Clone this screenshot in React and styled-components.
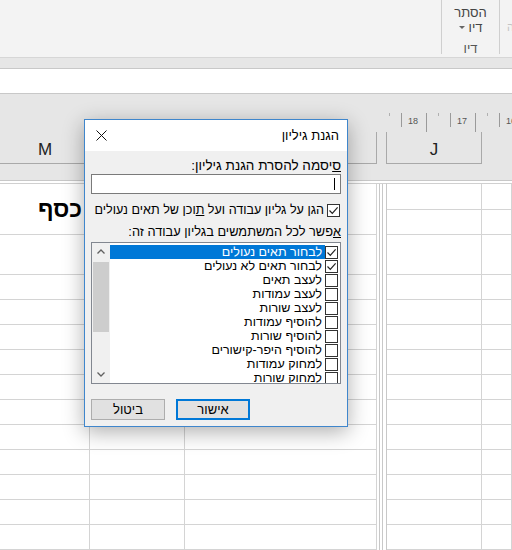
import React from 'react';
import styled, { createGlobalStyle } from 'styled-components';

const GlobalStyle = createGlobalStyle`
  *, *::before, *::after { box-sizing: border-box; }
  html, body { margin: 0; padding: 0; background: #fff; }
  body { font-family: "Liberation Sans", "DejaVu Sans", Arial, sans-serif; }
`;

const Page = styled.div`
  position: relative;
  width: 512px;
  height: 550px;
  overflow: hidden;
  display: flex;
  flex-direction: column;
  background: #fff;
`;

/* ---------- ribbon ---------- */
const Ribbon = styled.div`
  flex: none;
  height: 58px;
  background: #f3f3f3;
  border-bottom: 1px solid #d6d6d6;
  display: flex;
  justify-content: flex-end;
  align-items: flex-start;
`;

const RibbonGroup = styled.div`
  width: 59px;
  height: 54px;
  border-left: 1px solid #cfcfcf;
  border-right: 1px solid #cfcfcf;
  direction: rtl;
  display: flex;
  flex-direction: column;
  align-items: center;
  padding-top: 5px;
  font-size: 13px;
  line-height: 15px;
  color: #444;
`;

const RibbonLine = styled.div`
  display: flex;
  align-items: center;
  gap: 4px;
`;

const DropArrow = styled.span`
  width: 0;
  height: 0;
  border-left: 3px solid transparent;
  border-right: 3px solid transparent;
  border-top: 3px solid #666;
`;

const GroupLabel = styled.div`
  margin-top: 6px;
  color: #555;
`;

const GhostGlyph = styled.div`
  width: 12px;
  padding: 21px 0 0 7px;
  font-size: 11px;
  color: #c4c4c4;
  overflow: hidden;
  white-space: nowrap;
`;

const Band = styled.div`
  flex: none;
  height: 11px;
  background: #e6e6e6;
  border-bottom: 1px solid #c8c8c8;
`;

const FormulaBar = styled.div`
  flex: none;
  height: 25px;
  background: #fff;
  border-bottom: 1px solid #c8c8c8;
`;

/* ---------- sheet header ---------- */
const HeaderZone = styled.div`
  flex: none;
  height: 87px;
  display: flex;
  background: #e6e6e6;
  border-bottom: 1px solid #c8c8c8;
`;

const HeadPane = styled.div`
  width: ${p => p.$w ? `${p.$w}px` : 'auto'};
  flex: ${p => p.$w ? 'none' : 1};
  display: flex;
  flex-direction: column;
  overflow: hidden;
`;

const Outline = styled.div`
  height: 38px;
  display: flex;
  padding-left: ${p => p.$pad || 0}px;
  overflow: hidden;
`;

const RulerUnit = styled.div`
  flex: none;
  width: 49px;
  display: flex;
  align-items: flex-start;
  padding-top: 19px;
`;

const Tick = styled.span`
  width: 1px;
  height: 3px;
  background: #b0b0b0;
`;

const Bar = styled.span`
  width: 1px;
  height: ${p => p.$h}px;
  margin-left: ${p => p.$ml}px;
  background: #9a9a9a;
`;

const RulerNum = styled.span`
  margin-left: 6px;
  margin-top: 3px;
  width: 11px;
  font-size: 9px;
  line-height: 10px;
  color: #555;
  white-space: nowrap;
`;

const ColHeads = styled.div`
  height: 32px;
  display: flex;
`;

const ColHead = styled.div`
  flex: none;
  width: ${p => p.$w}px;
  display: flex;
  justify-content: center;
  align-items: flex-end;
  padding-bottom: 3px;
  font-size: 17px;
  color: #222;
  border-bottom: ${p => p.$open ? 'none' : '1px solid #a9a9a9'};
  border-left: ${p => p.$bl ? '1px solid #a9a9a9' : 'none'};
  border-right: ${p => p.$br ? '1px solid #a9a9a9' : 'none'};
`;

/* ---------- grid ---------- */
const GridZone = styled.div`
  flex: 1;
  display: flex;
  padding-top: 2px;
  background: #fff;
`;

const Grid = styled.div`
  flex: ${p => p.$w ? 'none' : 1};
  width: ${p => p.$w ? `${p.$w}px` : 'auto'};
  display: grid;
  grid-template-columns: ${p => p.$cols};
  grid-template-rows: ${p => p.$rows};
  border-top: 1px solid #d0d0d0;
`;

const Cell = styled.div`
  border-right: 1px solid #d4d4d4;
  border-bottom: 1px solid #d4d4d4;
  display: flex;
  align-items: center;
  justify-content: flex-start;
  padding-right: 7px;
  font-size: 23px;
  font-weight: bold;
  color: #000;
  direction: rtl;
  white-space: nowrap;
`;

const Splitter = styled.div`
  flex: none;
  width: 10px;
  border-top: 1px solid #d0d0d0;
  border-right: 1px solid #c8c8c8;
  background: linear-gradient(to right, #fff 0 2px, #c8c8c8 2px 3px, #fff 3px 5px, #c8c8c8 5px 6px, #fff 6px);
`;

/* ---------- dialog ---------- */
const Dialog = styled.div`
  position: absolute;
  left: 84px;
  top: 119px;
  width: 264px;
  height: 308px;
  border: 1px solid #3f86cc;
  background: #f0f0f0;
  box-shadow: 0 5px 20px rgba(0, 0, 0, 0.32);
  direction: rtl;
  display: flex;
  flex-direction: column;
  font-size: 13px;
  color: #000;
`;

const TitleBar = styled.div`
  height: 31px;
  flex: none;
  background: #fff;
  display: flex;
  align-items: center;
  justify-content: space-between;
  padding: 0 8px 0 11px;
`;

const Body = styled.div`
  padding: 7px 6px 0 6px;
  display: flex;
  flex-direction: column;
`;

const Label = styled.div`
  font-size: ${p => p.$fs || 13.5}px;
  line-height: 16px;
  margin-top: ${p => p.$mt || 0}px;
  white-space: nowrap;
`;

const Input = styled.div`
  height: 20px;
  background: #fff;
  border: 1px solid #7a7a7a;
  display: flex;
  align-items: center;
  padding-right: 5px;
`;

const Caret = styled.span`
  width: 1px;
  height: 12px;
  background: #000;
`;

const CheckRow = styled.div`
  margin-top: 8px;
  height: 16px;
  display: flex;
  align-items: center;
  gap: 3px;
  padding-right: 1px;
  font-size: 12.6px;
  white-space: nowrap;
`;

const Box = styled.span`
  flex: none;
  width: 13px;
  height: 13px;
  border: 1px solid #333;
  background: #fff;
  display: flex;
  align-items: center;
  justify-content: center;
`;

const ListBox = styled.div`
  margin-top: 2px;
  height: 142px;
  border: 1px solid #828790;
  background: #fff;
  display: flex;
  overflow: hidden;
`;

const Items = styled.div`
  flex: 1;
  padding-top: 2px;
  overflow: hidden;
`;

const Item = styled.div`
  height: 14px;
  display: flex;
  align-items: center;
  padding-right: 2px;
`;

const ItemText = styled.span`
  flex: 1;
  font-size: 12.5px;
  line-height: 14px;
  padding: 0 3px;
  white-space: nowrap;
  background: ${p => p.$sel ? '#0078d7' : 'transparent'};
  color: ${p => p.$sel ? '#fff' : '#000'};
`;

const ScrollBar = styled.div`
  flex: none;
  width: 18px;
  background: #f0f0f0;
  display: flex;
  flex-direction: column;
`;

const ArrowBtn = styled.div`
  height: 17px;
  flex: none;
  display: flex;
  align-items: center;
  justify-content: center;
`;

const Track = styled.div`
  flex: 1;
  padding: 2px 1px 0;
`;

const Thumb = styled.div`
  height: 70px;
  background: #cdcdcd;
`;

const Buttons = styled.div`
  margin-top: 15px;
  display: flex;
  justify-content: flex-end;
  gap: 11px;
`;

const Button = styled.div`
  width: 74px;
  height: 21px;
  display: flex;
  align-items: center;
  justify-content: center;
  background: #e1e1e1;
  border: ${p => p.$primary ? '2px solid #0078d7' : '1px solid #adadad'};
`;

const Check = () => (
  <svg width="11" height="11" viewBox="0 0 11 11">
    <path d="M1.5 5.5 L4.3 8.3 L9.6 2.4" fill="none" stroke="#222" strokeWidth="1.2" />
  </svg>
);

const Chevron = ({ up }) => (
  <svg width="8" height="5" viewBox="0 0 8 5">
    <path d={up ? 'M0.5 4.5 L4 1 L7.5 4.5' : 'M0.5 0.5 L4 4 L7.5 0.5'} fill="none" stroke="#606060" strokeWidth="1.3" />
  </svg>
);

const perms = [
  ['לבחור תאים נעולים', true],
  ['לבחור תאים לא נעולים', true],
  ['לעצב תאים', false],
  ['לעצב עמודות', false],
  ['לעצב שורות', false],
  ['להוסיף עמודות', false],
  ['להוסיף שורות', false],
  ['להוסיף היפר-קישורים', false],
  ['למחוק עמודות', false],
  ['למחוק שורות', false],
];

const leftRows = Array.from({ length: 13 });
const rightRows = Array.from({ length: 14 });

export default function App() {
  return (
    <Page>
      <GlobalStyle />
      <Ribbon>
        <RibbonGroup>
          <div>הסתר</div>
          <RibbonLine>דיו<DropArrow /></RibbonLine>
          <GroupLabel>דיו</GroupLabel>
        </RibbonGroup>
        <GhostGlyph>ה</GhostGlyph>
      </Ribbon>
      <Band />
      <FormulaBar />

      <HeaderZone>
        <HeadPane $w={377}>
          <Outline />
          <ColHeads>
            <ColHead $w={90}>M</ColHead>
            <ColHead $w={95}></ColHead>
            <ColHead $w={192} $br></ColHead>
          </ColHeads>
        </HeadPane>
        <HeadPane $w={9} />
        <HeadPane>
          <Outline $pad={3}>
            {['18', '17', '16'].map(n => (
              <RulerUnit key={n}>
                <Tick />
                <Bar $h={14} $ml={11} />
                <RulerNum>{n}</RulerNum>
                <Bar $h={19} $ml={7} />
              </RulerUnit>
            ))}
          </Outline>
          <ColHeads>
            <ColHead $w={96} $bl $br>J</ColHead>
            <ColHead $w={40} $open></ColHead>
          </ColHeads>
        </HeadPane>
      </HeaderZone>

      <GridZone>
        <Grid $w={377} $cols="90px 95px 192px" $rows="51px 40px repeat(11, 25px)">
          {leftRows.map((_, r) =>
            [0, 1, 2].map(c => (
              <Cell key={`${r}-${c}`}>{r === 0 && c === 0 ? 'כסף' : null}</Cell>
            ))
          )}
        </Grid>
        <Splitter />
        <Grid $cols="95px 1fr" $rows="26px 25px 40px repeat(11, 25px)">
          {rightRows.map((_, r) =>
            [0, 1].map(c => <Cell key={`${r}-${c}`} />)
          )}
        </Grid>
      </GridZone>

      <Dialog>
        <TitleBar>
          <span>הגנת גיליון</span>
          <svg width="11" height="11" viewBox="0 0 11 11">
            <path d="M0.5 0.5 L10.5 10.5 M10.5 0.5 L0.5 10.5" stroke="#111" strokeWidth="1" />
          </svg>
        </TitleBar>
        <Body>
          <Label><u>ס</u>יסמה להסרת הגנת גיליון:</Label>
          <Input><Caret /></Input>
          <CheckRow>
            <Box><Check /></Box>
            <span>הגן על גליון עבודה ועל <u>ת</u>וכן של תאים נעולים</span>
          </CheckRow>
          <Label $mt={6} $fs={12.8}><u>א</u>פשר לכל המשתמשים בגליון עבודה זה:</Label>
          <ListBox>
            <Items>
              {perms.map(([text, on], i) => (
                <Item key={text}>
                  <Box>{on && <Check />}</Box>
                  <ItemText $sel={i === 0}>{text}</ItemText>
                </Item>
              ))}
            </Items>
            <ScrollBar>
              <ArrowBtn><Chevron up /></ArrowBtn>
              <Track><Thumb /></Track>
              <ArrowBtn><Chevron /></ArrowBtn>
            </ScrollBar>
          </ListBox>
          <Buttons>
            <Button $primary>אישור</Button>
            <Button>ביטול</Button>
          </Buttons>
        </Body>
      </Dialog>
    </Page>
  );
}
